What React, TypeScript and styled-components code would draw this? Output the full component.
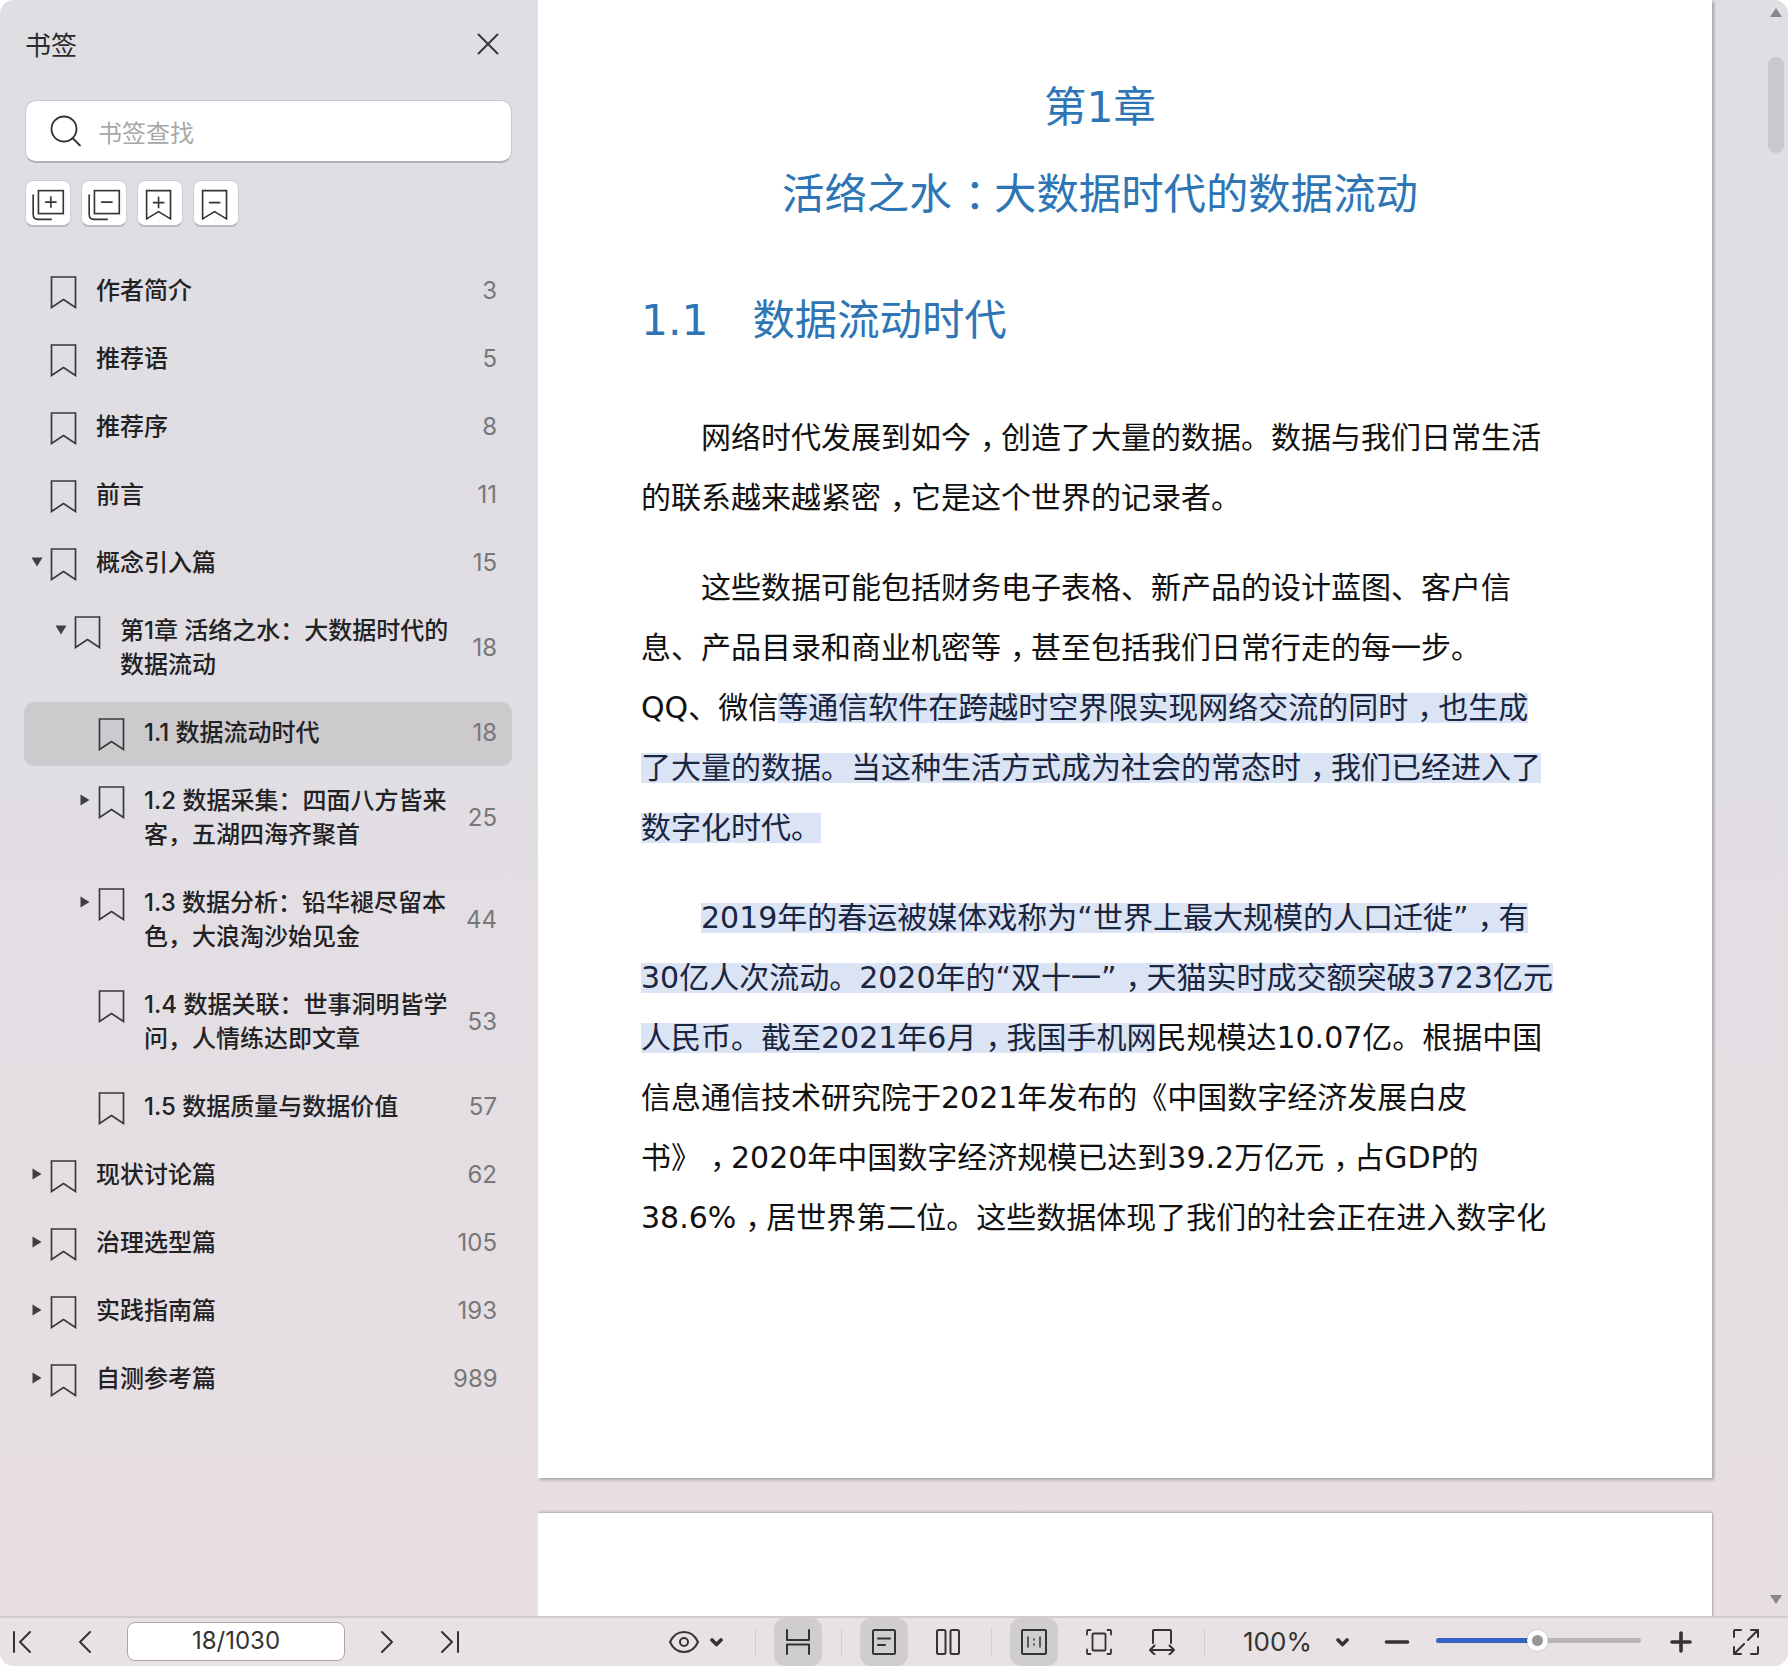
import styled, { createGlobalStyle } from "styled-components";

const GlobalStyle = createGlobalStyle`
  html, body {
    margin: 0;
    padding: 0;
    background: #fff;
  }
`;

const Window = styled.div`
  width: 1788px;
  height: 1666px;
  display: flex;
  flex-direction: column;
  border-radius: 14px;
  overflow: hidden;
  background: linear-gradient(180deg, #dedee3 0%, #e1dee3 45%, #e8dfe2 100%);
  font-family: Inter, "Noto Sans CJK SC", sans-serif;
`;

const Body = styled.div`
  flex: 1;
  min-height: 0;
  display: flex;
`;

/* ---------- sidebar ---------- */

const Sidebar = styled.aside`
  width: 538px;
  flex: none;
  box-sizing: border-box;
  padding: 0 26px 0 25px;
`;

const SideHeader = styled.div`
  height: 88px;
  display: flex;
  align-items: center;
  justify-content: space-between;
  padding-right: 13px;
  margin-bottom: 12px;
`;

const SideTitle = styled.span`
  margin-top: -2px;
  font-size: 26px;
  color: #2c2c2e;
`;

const SearchBox = styled.div`
  height: 63px;
  box-sizing: border-box;
  display: flex;
  align-items: center;
  gap: 16px;
  padding-left: 24px;
  background: #fff;
  border: 1px solid #c9c8cc;
  border-bottom: 2px solid #b3b2b6;
  border-radius: 11px;
`;

const SearchHint = styled.span`
  font-size: 24px;
  color: #a8a8a8;
`;

const ActionRow = styled.div`
  display: flex;
  gap: 10px;
  margin: 17px 0 29px;
`;

const ActionButton = styled.button`
  width: 46px;
  height: 47px;
  padding: 0;
  display: flex;
  background: #fff;
  border: 1px solid #cfced2;
  border-bottom: 2px solid #b8b7bb;
  border-radius: 8px;
`;

const Row = styled.div<{ $level: number; $active?: boolean }>`
  display: flex;
  align-items: flex-start;
  padding: ${(p) => (p.$active ? "13px" : "17px")} 15px 17px ${(p) => p.$level * 24}px;
  margin: ${(p) => (p.$active ? "4px" : "0")} 0 0 -1px;
  border-radius: 10px;
  background: ${(p) => (p.$active ? "#cdcace" : "transparent")};
`;

const ArrowSlot = styled.div`
  width: 26px;
  height: 34px;
  flex: none;
  display: flex;
  align-items: center;
  justify-content: center;
`;

const Mark = styled.div`
  width: 27px;
  height: 31px;
  flex: none;
  margin: 3px 19px 0 0;

  svg {
    display: block;
  }
`;

const RowText = styled.div`
  flex: 1;
  margin: 1px 0 -1px;
  font-size: 24px;
  font-weight: 500;
  line-height: 34px;
  white-space: nowrap;
  color: #222224;
`;

const RowPage = styled.div`
  width: 44px;
  flex: none;
  align-self: center;
  margin: 1px 0 -1px;
  text-align: right;
  font-size: 24px;
  line-height: 34px;
  color: #77777a;
`;

/* ---------- document ---------- */

const Viewer = styled.main`
  flex: 1;
  min-width: 0;
  display: flex;
`;

const Pages = styled.div`
  width: 1178px;
  flex: none;
  display: flex;
  flex-direction: column;
  gap: 35px;
  overflow: hidden;
`;

const Page = styled.section`
  flex: none;
  width: 1174px;
  background: #fff;
  box-shadow: 2px 2px 3px rgba(0, 0, 0, 0.26);
  box-sizing: border-box;
  height: 1478px;
  padding: 78px 153px 0 103px;
  font-family: "DejaVu Sans", "Noto Sans CJK SC", sans-serif;
  text-spacing-trim: space-all;
`;

const NextPage = styled(Page)`
  height: 400px;
  padding: 0;
  box-shadow: 0 -1px 3px rgba(0, 0, 0, 0.2), 1px 0 2px rgba(0, 0, 0, 0.18);
`;

const Chapter = styled.h1`
  margin: 0 0 27px;
  font-size: 42.4px;
  font-weight: 400;
  line-height: 60px;
  text-align: center;
  color: #2e75b6;
`;

const SectionTitle = styled.h2`
  margin: 66px 0 57px;
  display: flex;
  gap: 44px;
  font-size: 42.4px;
  font-weight: 400;
  line-height: 60px;
  color: #2e75b6;
`;

const Para = styled.div`
  margin-bottom: 30px;
`;

const Line = styled.div<{ $indent?: boolean }>`
  height: 60px;
  padding-left: ${(p) => (p.$indent ? "60px" : "0")};
  font-size: 30px;
  line-height: 60px;
  white-space: nowrap;
  color: #111;
`;

const Picked = styled.span`
  display: inline-block;
  line-height: 30px;
  background: #dbe4f5;
  color: #1a2540;
`;

/* the book sets its fullwidth comma and colon in the middle of the cell */
const Punct = styled.span`
  padding-left: 0.3em;
  letter-spacing: -0.3em;
`;

const ScrollColumn = styled.div`
  flex: 1;
  display: flex;
  flex-direction: column;
  align-items: flex-end;
  padding: 8px 4px 12px 0;
`;

const ScrollThumb = styled.div`
  width: 16px;
  height: 96px;
  margin-top: 40px;
  border-radius: 8px;
  background: #c9c8cd;
`;

const ScrollEnd = styled.svg<{ $bottom?: boolean }>`
  display: block;
  margin-right: 2px;
  margin-top: ${(p) => (p.$bottom ? "auto" : "0")};
`;

/* ---------- bottom toolbar ---------- */

const Toolbar = styled.footer`
  height: 50px;
  flex: none;
  box-sizing: border-box;
  display: flex;
  align-items: stretch;
  border-top: 2px solid #d0ccce;
  background: #e9e2e4;
`;

const Tool = styled.div<{ $w: number; $on?: boolean }>`
  width: ${(p) => p.$w}px;
  flex: none;
  display: flex;
  align-items: center;
  justify-content: center;
  border-radius: 11px;
  background: ${(p) => (p.$on ? "#d0cdcf" : "transparent")};
`;

const PageBox = styled.div`
  width: 218px;
  height: 39px;
  align-self: center;
  margin: 0 0 2px 1px;
  flex: none;
  box-sizing: border-box;
  background: #fff;
  border: 1px solid #a9a7aa;
  border-radius: 8px;
  font-size: 24px;
  line-height: 35px;
  text-align: center;
  color: #333;
`;

const Rule = styled.div<{ $l: number; $r: number }>`
  width: 1px;
  height: 29px;
  flex: none;
  align-self: center;
  margin: 0 ${(p) => p.$r}px 0 ${(p) => p.$l}px;
  background: #d2ced0;
`;

const Gap = styled.div<{ $w: number }>`
  width: ${(p) => p.$w}px;
  flex: none;
`;

const ZoomLabel = styled.div`
  width: 66px;
  flex: none;
  align-self: center;
  font-size: 26px;
  line-height: 30px;
  white-space: nowrap;
  color: #333;
`;

const Slider = styled.div`
  width: 205px;
  height: 5px;
  flex: none;
  align-self: center;
  position: relative;
  margin: 0 0 3px 17px;
  border-radius: 3px;
  background: #b9b4b6;
`;

const SliderFill = styled.div`
  width: 100px;
  height: 100%;
  border-radius: 3px;
  background: #3564c4;
`;

const SliderKnob = styled.div`
  position: absolute;
  left: 91px;
  top: -8px;
  width: 21px;
  height: 21px;
  box-sizing: border-box;
  border: 5px solid #fff;
  border-radius: 50%;
  background: #97959a;
  box-shadow: 0 0 2px rgba(0, 0, 0, 0.25);
`;

const ink = "#333";

function Triangle({ dir }: { dir: "down" | "right" }) {
  return dir === "down" ? (
    <svg width="12" height="10" viewBox="0 0 12 10">
      <path d="M0.5 0.5H11.5L6 9.5Z" fill="#3f3f42" />
    </svg>
  ) : (
    <svg width="10" height="12" viewBox="0 0 10 12">
      <path d="M0.5 0.5V11.5L9.5 6Z" fill="#3f3f42" />
    </svg>
  );
}

function BookmarkIcon() {
  return (
    <svg width="27" height="33" viewBox="0 0 27 33" fill="none" stroke="#3a3a3d" strokeWidth="1.7">
      <path d="M1.5 1H25.5V31.5L13.5 23.5L1.5 31.5Z" />
    </svg>
  );
}

function CloseIcon() {
  return (
    <svg width="22" height="22" viewBox="0 0 22 22" stroke="#333" strokeWidth="1.8" strokeLinecap="round">
      <path d="M1.5 1.5L20.5 20.5M20.5 1.5L1.5 20.5" />
    </svg>
  );
}

function SearchIcon() {
  return (
    <svg width="32" height="32" viewBox="0 0 32 32" fill="none" stroke="#333" strokeWidth="1.8">
      <circle cx="14" cy="14" r="12.5" />
      <path d="M22.5 23L30 30.5" strokeLinecap="round" />
    </svg>
  );
}

function StackIcon({ plus }: { plus?: boolean }) {
  return (
    <svg width="46" height="47" viewBox="0 0 46 47" fill="none" stroke={ink} strokeWidth="1.7">
      <rect x="13" y="9" width="26" height="24" />
      <path d="M7.5 13V34Q7.5 39 12.5 39H27" />
      <path d="M20 21H32" />
      {plus && <path d="M26 15V27" />}
    </svg>
  );
}

function RibbonIcon({ plus }: { plus?: boolean }) {
  return (
    <svg width="46" height="47" viewBox="0 0 46 47" fill="none" stroke={ink} strokeWidth="1.7">
      <path d="M9 9H34V38.5L21.5 31L9 38.5Z" />
      <path d="M15.5 21.5H27.5" />
      {plus && <path d="M21.5 15.5V27.5" />}
    </svg>
  );
}

const strokeProps = {
  fill: "none",
  stroke: ink,
  strokeWidth: 2,
  strokeLinecap: "round" as const,
  strokeLinejoin: "round" as const,
};

function Glyph({ w, h, d, bold }: { w: number; h: number; d: string; bold?: boolean }) {
  return (
    <svg width={w} height={h} viewBox={`0 0 ${w} ${h}`} {...strokeProps} strokeWidth={bold ? 3.6 : 2}>
      <path d={d} />
    </svg>
  );
}

function EyeIcon() {
  return (
    <svg width="30" height="24" viewBox="0 0 30 24" {...strokeProps}>
      <path d="M1 12C4 5.5 9 2 15 2S26 5.5 29 12C26 18.5 21 22 15 22S4 18.5 1 12Z" />
      <circle cx="15" cy="12" r="4" />
    </svg>
  );
}

function PageIcon() {
  return (
    <svg width="24" height="26" viewBox="0 0 24 26" {...strokeProps}>
      <rect x="1" y="1" width="22" height="24" rx="1.5" />
      <path d="M6 9.5H18M6 16H13" />
    </svg>
  );
}

function ColumnsIcon() {
  return (
    <svg width="24" height="26" viewBox="0 0 24 26" {...strokeProps}>
      <rect x="1" y="1" width="8.5" height="24" rx="1.5" />
      <rect x="14.5" y="1" width="8.5" height="24" rx="1.5" />
    </svg>
  );
}

function ActualSizeIcon() {
  return (
    <svg width="26" height="26" viewBox="0 0 26 26" {...strokeProps}>
      <rect x="1" y="1" width="24" height="24" rx="1" />
      <path d="M7 8V18M19 8V18M13 10V11M13 15V16" strokeWidth="1.5" />
    </svg>
  );
}

function FitPageIcon() {
  return (
    <svg width="26" height="26" viewBox="0 0 26 26" {...strokeProps} strokeWidth="1.8">
      <path d="M1 5.5V2Q1 1 2 1H4.5M21.5 1H24Q25 1 25 2V5.5M1 20.5V24Q1 25 2 25H4.5M21.5 25H24Q25 25 25 24V20.5" />
      <rect x="6.5" y="4.5" width="13" height="17" rx="1" />
    </svg>
  );
}

function FitWidthIcon() {
  return (
    <svg width="28" height="26" viewBox="0 0 28 26" {...strokeProps}>
      <path d="M5 14V2Q5 1 6 1H22Q23 1 23 2V14" />
      <path d="M2 21H26M6.5 16.5L2 21L6.5 25.5M21.5 16.5L26 21L21.5 25.5" />
    </svg>
  );
}

function FullscreenIcon() {
  return (
    <svg width="26" height="26" viewBox="0 0 26 26" {...strokeProps}>
      <path d="M1 8V2Q1 1 2 1H8M25 18V24Q25 25 24 25H18" />
      <path d="M15 11L25 1M18 1H25V8M11 15L1 25M1 18V25H8" />
    </svg>
  );
}

type Item = {
  title: React.ReactNode;
  page: number;
  level: number;
  arrow?: "down" | "right";
  active?: boolean;
};

const items: Item[] = [
  { title: "作者简介", page: 3, level: 0 },
  { title: "推荐语", page: 5, level: 0 },
  { title: "推荐序", page: 8, level: 0 },
  { title: "前言", page: 11, level: 0 },
  { title: "概念引入篇", page: 15, level: 0, arrow: "down" },
  {
    title: (
      <>
        第1章 活络之水：大数据时代的
        <br />
        数据流动
      </>
    ),
    page: 18,
    level: 1,
    arrow: "down",
  },
  { title: "1.1 数据流动时代", page: 18, level: 2, active: true },
  {
    title: (
      <>
        1.2 数据采集：四面八方皆来
        <br />
        客，五湖四海齐聚首
      </>
    ),
    page: 25,
    level: 2,
    arrow: "right",
  },
  {
    title: (
      <>
        1.3 数据分析：铅华褪尽留本
        <br />
        色，大浪淘沙始见金
      </>
    ),
    page: 44,
    level: 2,
    arrow: "right",
  },
  {
    title: (
      <>
        1.4 数据关联：世事洞明皆学
        <br />
        问，人情练达即文章
      </>
    ),
    page: 53,
    level: 2,
  },
  { title: "1.5 数据质量与数据价值", page: 57, level: 2 },
  { title: "现状讨论篇", page: 62, level: 0, arrow: "right" },
  { title: "治理选型篇", page: 105, level: 0, arrow: "right" },
  { title: "实践指南篇", page: 193, level: 0, arrow: "right" },
  { title: "自测参考篇", page: 989, level: 0, arrow: "right" },
];

const Comma = () => <Punct>，</Punct>;

export default function App() {
  return (
    <Window>
      <GlobalStyle />
      <Body>
        <Sidebar>
          <SideHeader>
            <SideTitle>书签</SideTitle>
            <CloseIcon />
          </SideHeader>
          <SearchBox>
            <SearchIcon />
            <SearchHint>书签查找</SearchHint>
          </SearchBox>
          <ActionRow>
            <ActionButton>
              <StackIcon plus />
            </ActionButton>
            <ActionButton>
              <StackIcon />
            </ActionButton>
            <ActionButton>
              <RibbonIcon plus />
            </ActionButton>
            <ActionButton>
              <RibbonIcon />
            </ActionButton>
          </ActionRow>
          {items.map((item) => (
            <Row key={item.page + "-" + item.level} $level={item.level} $active={item.active}>
              <ArrowSlot>{item.arrow && <Triangle dir={item.arrow} />}</ArrowSlot>
              <Mark>
                <BookmarkIcon />
              </Mark>
              <RowText>{item.title}</RowText>
              <RowPage>{item.page}</RowPage>
            </Row>
          ))}
        </Sidebar>

        <Viewer>
          <Pages>
            <Page>
              <Chapter>第1章</Chapter>
              <Chapter>
                活络之水<Punct>：</Punct>大数据时代的数据流动
              </Chapter>
              <SectionTitle>
                <span>1.1</span>
                <span>数据流动时代</span>
              </SectionTitle>
              <Para>
                <Line $indent>
                  网络时代发展到如今<Comma />创造了大量的数据。数据与我们日常生活
                </Line>
                <Line>
                  的联系越来越紧密<Comma />它是这个世界的记录者。
                </Line>
              </Para>
              <Para>
                <Line $indent>这些数据可能包括财务电子表格、新产品的设计蓝图、客户信</Line>
                <Line>
                  息、产品目录和商业机密等<Comma />甚至包括我们日常行走的每一步。
                </Line>
                <Line>
                  QQ、微信
                  <Picked>
                    等通信软件在跨越时空界限实现网络交流的同时<Comma />也生成
                  </Picked>
                </Line>
                <Line>
                  <Picked>
                    了大量的数据。当这种生活方式成为社会的常态时<Comma />我们已经进入了
                  </Picked>
                </Line>
                <Line>
                  <Picked>数字化时代。</Picked>
                </Line>
              </Para>
              <Para>
                <Line $indent>
                  <Picked>
                    2019年的春运被媒体戏称为“世界上最大规模的人口迁徙”<Comma />有
                  </Picked>
                </Line>
                <Line>
                  <Picked>
                    30亿人次流动。2020年的“双十一”<Comma />天猫实时成交额突破3723亿元
                  </Picked>
                </Line>
                <Line>
                  <Picked>
                    人民币。截至2021年6月<Comma />我国手机网
                  </Picked>
                  民规模达10.07亿。根据中国
                </Line>
                <Line>信息通信技术研究院于2021年发布的《中国数字经济发展白皮</Line>
                <Line>
                  书》<Comma />2020年中国数字经济规模已达到39.2万亿元<Comma />占GDP的
                </Line>
                <Line>
                  38.6%<Comma />居世界第二位。这些数据体现了我们的社会正在进入数字化
                </Line>
              </Para>
            </Page>
            <NextPage />
          </Pages>
          <ScrollColumn>
            <ScrollEnd width="12" height="9" viewBox="0 0 12 9">
              <path d="M6 0L12 9H0Z" fill="#87878b" />
            </ScrollEnd>
            <ScrollThumb />
            <ScrollEnd $bottom width="12" height="9" viewBox="0 0 12 9">
              <path d="M0 0H12L6 9Z" fill="#87878b" />
            </ScrollEnd>
          </ScrollColumn>
        </Viewer>
      </Body>

      <Toolbar>
        <Tool $w={44}>
          <Glyph w={20} h={24} d="M2 2V22M18 2L8 12L18 22" />
        </Tool>
        <Tool $w={82}>
          <Glyph w={14} h={24} d="M12 2L2 12L12 22" />
        </Tool>
        <PageBox>18/1030</PageBox>
        <Tool $w={84}>
          <Glyph w={14} h={24} d="M2 2L12 12L2 22" />
        </Tool>
        <Tool $w={42}>
          <Glyph w={20} h={24} d="M18 2V22M2 2L12 12L2 22" />
        </Tool>
        <Gap $w={189} />
        <Tool $w={48}>
          <EyeIcon />
        </Tool>
        <Tool $w={16}>
          <Glyph w={13} h={9} d="M2 2L6.5 6.5L11 2" bold />
        </Tool>
        <Rule $l={31} $r={18} />
        <Tool $w={48} $on>
          <Glyph w={24} h={26} d="M1 1V11H23V1M1 25V15.5H23V25" />
        </Tool>
        <Rule $l={19} $r={18} />
        <Tool $w={48} $on>
          <PageIcon />
        </Tool>
        <Tool $w={80}>
          <ColumnsIcon />
        </Tool>
        <Rule $l={3} $r={18} />
        <Tool $w={48} $on>
          <ActualSizeIcon />
        </Tool>
        <Tool $w={82}>
          <FitPageIcon />
        </Tool>
        <Tool $w={44}>
          <FitWidthIcon />
        </Tool>
        <Rule $l={20} $r={38} />
        <ZoomLabel>100%</ZoomLabel>
        <Tool $w={66}>
          <Glyph w={13} h={9} d="M2 2L6.5 6.5L11 2" bold />
        </Tool>
        <Tool $w={44}>
          <Glyph w={26} h={6} d="M2.5 3H23.5" bold />
        </Tool>
        <Slider>
          <SliderFill />
          <SliderKnob />
        </Slider>
        <Tool $w={80}>
          <Glyph w={22} h={22} d="M2 11H20M11 2V20" bold />
        </Tool>
        <Tool $w={50}>
          <FullscreenIcon />
        </Tool>
      </Toolbar>
    </Window>
  );
}
